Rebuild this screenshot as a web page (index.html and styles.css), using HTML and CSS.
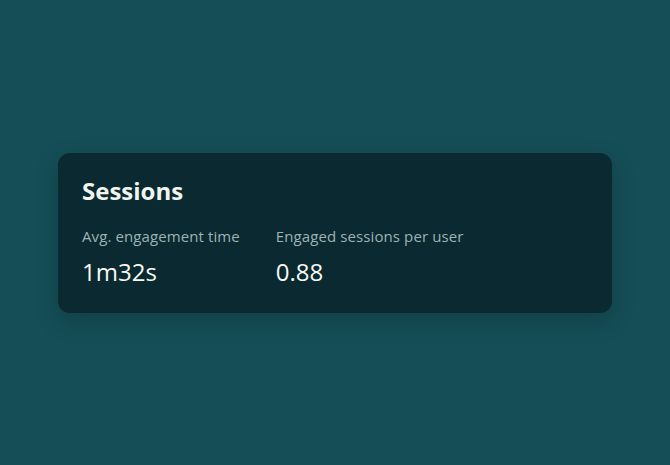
FILE: index.html
```html
<!DOCTYPE html>
<html>
<head>
<meta charset="utf-8">
<link rel="stylesheet" href="styles.css">
</head>
<body>
<div class="page">
  <section class="card">
    <h2 class="title">Sessions</h2>
    <div class="metrics">
      <div class="metric">
        <div class="label">Avg. engagement time</div>
        <div class="value">1m32s</div>
      </div>
      <div class="metric">
        <div class="label">Engaged sessions per user</div>
        <div class="value">0.88</div>
      </div>
    </div>
  </section>
</div>
</body>
</html>
```

FILE: styles.css
```css
html, body {
  margin: 0;
  padding: 0;
  background: #154e57;
}
body {
  font-family: "Open Sans", "Noto Sans", sans-serif;
}
.page {
  width: 670px;
  height: 465px;
  display: flex;
  align-items: center;
  justify-content: center;
}
.card {
  width: 554px;
  height: 160px;
  box-sizing: border-box;
  padding: 21px 24px;
  background: #0a2930;
  border-radius: 12px;
  box-shadow: 0 8px 24px rgba(0, 0, 0, 0.18);
}
.title {
  margin: 0;
  font-size: 24px;
  line-height: 34px;
  font-weight: 700;
  color: #f2f5ef;
}
.metrics {
  display: flex;
  gap: 36px;
  margin-top: 18px;
}
.label {
  font-size: 15px;
  line-height: 20px;
  letter-spacing: 0.1px;
  color: #9db3b3;
}
.value {
  margin-top: 11px;
  font-size: 24px;
  line-height: 30px;
  color: #f7f9f4;
}
```
